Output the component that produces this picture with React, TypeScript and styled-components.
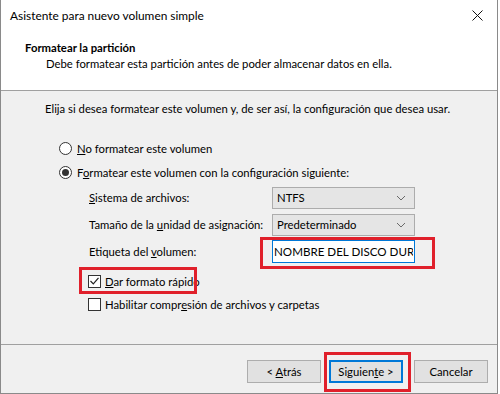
import styled, { createGlobalStyle } from 'styled-components';

const GlobalStyle = createGlobalStyle`
  html, body {
    margin: 0;
    padding: 0;
    background: #ffffff;
  }
  body {
    font-family: Lato, "Noto Sans", sans-serif;
    font-size: 11.3px;
    color: #000;
  }
`;

//#region Window
const Window = styled.div`
  position: relative;
  width: 496px;
  height: 393px;
  border-left: 1px solid #8a8a8a;
  border-right: 1px solid #8a8a8a;
  border-bottom: 1px solid #8a8a8a;
  display: flex;
  flex-direction: column;
  background: #f0f0f0;
  overflow: hidden;
`;

const TitleBar = styled.div`
  height: 31px;
  background: #fff;
  display: flex;
  align-items: center;
  justify-content: space-between;
  padding: 0 14px 0 9px;
  font-size: 11.9px;
`;

const CloseButton = styled.div`
  width: 12px;
  height: 12px;
  display: flex;
  align-items: center;
  justify-content: center;
`;

const Header = styled.div`
  height: 60px;
  background: #fff;
  border-bottom: 1px solid #a0a0a0;
  display: flex;
  flex-direction: column;
  padding-top: 9px;
  box-sizing: border-box;
`;

const HeaderTitle = styled.div`
  font-weight: bold;
  padding-left: 24px;
  line-height: 16px;
`;

const HeaderSub = styled.div`
  padding-left: 45px;
  line-height: 16px;
`;
//#endregion

//#region Body
const Body = styled.div`
  height: 254px;
  box-sizing: border-box;
  padding-top: 10px;
  border-bottom: 1px solid #a0a0a0;
`;

const Intro = styled.div`
  padding-left: 44px;
  line-height: 16px;
  margin-bottom: 19px;
  white-space: nowrap;
`;

const OptionRow = styled.div`
  height: 24px;
  display: flex;
  align-items: center;
  padding-left: 58px;
  gap: 5px;
`;

const Radio = styled.span<{ checked?: boolean }>`
  width: 11px;
  height: 11px;
  border: 1px solid #333;
  border-radius: 50%;
  background: #fff;
  display: flex;
  align-items: center;
  justify-content: center;

  &::after {
    content: '';
    display: ${(p) => (p.checked ? 'block' : 'none')};
    width: 7px;
    height: 7px;
    border-radius: 50%;
    background: #333;
  }
`;

const FieldRow = styled.div`
  height: 27px;
  display: flex;
  align-items: center;
  padding-left: 88px;
`;

const FieldLabel = styled.span`
  width: 183px;
  white-space: nowrap;
`;

const Select = styled.div`
  width: 143px;
  height: 22px;
  box-sizing: border-box;
  border: 1px solid #acacac;
  background: #e5e5e5;
  display: flex;
  align-items: center;
  justify-content: space-between;
  padding: 0 8px 0 4px;
`;

const TextInput = styled.input`
  width: 143px;
  height: 23px;
  box-sizing: border-box;
  border: 1px solid #0078d7;
  background: #fff;
  padding: 0 1px;
  font-family: Lato, "Noto Sans", sans-serif;
  font-size: 11.6px;
  color: #000;
  outline: none;
`;

const CheckRow = styled.div<{ first?: boolean }>`
  height: ${(p) => (p.first ? '24px' : '23px')};
  margin-top: ${(p) => (p.first ? '4px' : '0')};
  display: flex;
  align-items: center;
  padding-left: 87px;
  gap: 4px;
`;

const Checkbox = styled.span`
  width: 11px;
  height: 11px;
  border: 1px solid #333;
  background: #fff;
  display: flex;
  align-items: center;
  justify-content: center;
`;
//#endregion

//#region Footer
const Footer = styled.div`
  flex: 1;
  display: flex;
  justify-content: flex-end;
  align-items: flex-start;
  padding: 15px 9px 0 0;
`;

const Button = styled.div<{ primary?: boolean; gapRight?: number }>`
  width: 74px;
  height: 23px;
  box-sizing: border-box;
  border: 1px solid ${(p) => (p.primary ? '#0078d7' : '#adadad')};
  box-shadow: ${(p) => (p.primary ? 'inset 0 0 0 1px #0078d7' : 'none')};
  background: #e1e1e1;
  display: flex;
  align-items: center;
  justify-content: center;
  margin-right: ${(p) => p.gapRight ?? 0}px;
  white-space: pre;
`;
//#endregion

const Highlight = styled.div`
  position: absolute;
  border: 3px solid #e0202b;
  box-sizing: border-box;
`;

function Chevron() {
  return (
    <svg width="10" height="6" viewBox="0 0 10 6">
      <path d="M1 1 L5 5 L9 1" fill="none" stroke="#6a6a6a" strokeWidth="1" />
    </svg>
  );
}

export default function App() {
  return (
    <>
      <GlobalStyle />
      <Window>
        <TitleBar>
          <span>Asistente para nuevo volumen simple</span>
          <CloseButton>
            <svg width="11" height="11" viewBox="0 0 11 11">
              <path d="M0.5 0.5 L10.5 10.5 M10.5 0.5 L0.5 10.5" stroke="#111" strokeWidth="1" />
            </svg>
          </CloseButton>
        </TitleBar>
        <Header>
          <HeaderTitle>Formatear la partición</HeaderTitle>
          <HeaderSub>Debe formatear esta partición antes de poder almacenar datos en ella.</HeaderSub>
        </Header>
        <Body>
          <Intro>Elija si desea formatear este volumen y, de ser así, la configuración que desea usar.</Intro>
          <OptionRow>
            <Radio />
            <span><u>N</u>o formatear este volumen</span>
          </OptionRow>
          <OptionRow>
            <Radio checked />
            <span>F<u>o</u>rmatear este volumen con la configuración siguiente:</span>
          </OptionRow>
          <FieldRow>
            <FieldLabel><u>S</u>istema de archivos:</FieldLabel>
            <Select>
              <span>NTFS</span>
              <Chevron />
            </Select>
          </FieldRow>
          <FieldRow>
            <FieldLabel>Tamaño de la <u>u</u>nidad de asignación:</FieldLabel>
            <Select>
              <span>Predeterminado</span>
              <Chevron />
            </Select>
          </FieldRow>
          <FieldRow>
            <FieldLabel>Etiqueta del <u>v</u>olumen:</FieldLabel>
            <TextInput readOnly value="NOMBRE DEL DISCO DURO" />
          </FieldRow>
          <CheckRow first>
            <Checkbox>
              <svg width="9" height="8" viewBox="0 0 9 8">
                <path d="M0.5 4 L3.3 6.8 L8.5 0.8" fill="none" stroke="#222" strokeWidth="1.2" />
              </svg>
            </Checkbox>
            <span><u>D</u>ar formato rápido</span>
          </CheckRow>
          <CheckRow>
            <Checkbox />
            <span>Habilitar compr<u>e</u>sión de archivos y carpetas</span>
          </CheckRow>
        </Body>
        <Footer>
          <Button gapRight={8}><span>&lt; <u>A</u>trás</span></Button>
          <Button primary gapRight={11}><span>Siguien<u>t</u>e &gt;</span></Button>
          <Button>Cancelar</Button>
        </Footer>
        <Highlight style={{ left: 259, top: 237, width: 175, height: 32 }} />
        <Highlight style={{ left: 78, top: 267, width: 118, height: 27 }} />
        <Highlight style={{ left: 323, top: 352, width: 87, height: 40 }} />
      </Window>
    </>
  );
}
